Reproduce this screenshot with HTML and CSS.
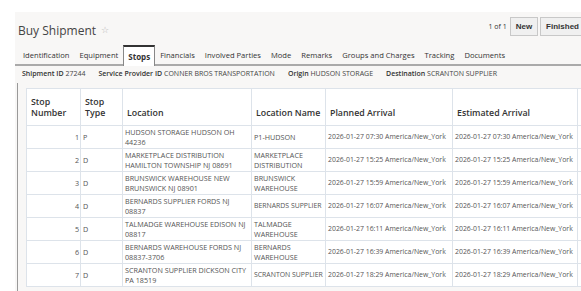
FILE: index.html
```html
<!DOCTYPE html>
<html lang="en">
<head>
    <meta charset="UTF-8">
    <meta name="viewport" content="width=device-width, initial-scale=1.0">
    <title>Buy Shipment</title>
    <link rel="stylesheet" href="styles.css">
</head>
<body>
    <div class="page">
        <div class="header">
            <h1>Buy Shipment <span class="star">&#9734;</span></h1>
            <div class="actions">
                <span class="count">1 of 1</span>
                <button>New</button>
                <button>Finished</button>
            </div>
        </div>
        <div class="tabs">
            <span class="tab">Identification</span>
            <span class="tab">Equipment</span>
            <span class="tab active">Stops</span>
            <span class="tab">Financials</span>
            <span class="tab">Involved Parties</span>
            <span class="tab">Mode</span>
            <span class="tab">Remarks</span>
            <span class="tab">Groups and Charges</span>
            <span class="tab">Tracking</span>
            <span class="tab">Documents</span>
        </div>
        <div class="info">
            <span><b>Shipment ID</b> 27244</span>
            <span><b>Service Provider ID</b> CONNER BROS TRANSPORTATION</span>
            <span><b>Origin</b> HUDSON STORAGE</span>
            <span><b>Destination</b> SCRANTON SUPPLIER</span>
        </div>
        <div class="panel">
            <table class="stops">
                <colgroup>
                    <col style="width: 54px">
                    <col style="width: 42px">
                    <col style="width: 129px">
                    <col style="width: 74px">
                    <col style="width: 127px">
                    <col style="width: 125px">
                    <col style="width: 60px">
                </colgroup>
                <thead>
                    <tr>
                        <th>Stop<br>Number</th>
                        <th>Stop<br>Type</th>
                        <th>Location</th>
                        <th>Location Name</th>
                        <th>Planned Arrival</th>
                        <th>Estimated Arrival</th>
                        <th></th>
                    </tr>
                </thead>
                <tbody>
                    <tr>
                        <td class="num">1</td><td>P</td>
                        <td>HUDSON STORAGE HUDSON OH 44236</td>
                        <td>P1-HUDSON</td>
                        <td class="date">2026-01-27 07:30 America/New_York</td>
                        <td class="date">2026-01-27 07:30 America/New_York</td>
                        <td></td>
                    </tr>
                    <tr>
                        <td class="num">2</td><td>D</td>
                        <td>MARKETPLACE DISTRIBUTION HAMILTON TOWNSHIP NJ 08691</td>
                        <td>MARKETPLACE DISTRIBUTION</td>
                        <td class="date">2026-01-27 15:25 America/New_York</td>
                        <td class="date">2026-01-27 15:25 America/New_York</td>
                        <td></td>
                    </tr>
                    <tr>
                        <td class="num">3</td><td>D</td>
                        <td>BRUNSWICK WAREHOUSE NEW BRUNSWICK NJ 08901</td>
                        <td>BRUNSWICK WAREHOUSE</td>
                        <td class="date">2026-01-27 15:59 America/New_York</td>
                        <td class="date">2026-01-27 15:59 America/New_York</td>
                        <td></td>
                    </tr>
                    <tr>
                        <td class="num">4</td><td>D</td>
                        <td>BERNARDS SUPPLIER FORDS NJ 08837</td>
                        <td class="single">BERNARDS SUPPLIER</td>
                        <td class="date">2026-01-27 16:07 America/New_York</td>
                        <td class="date">2026-01-27 16:07 America/New_York</td>
                        <td></td>
                    </tr>
                    <tr>
                        <td class="num">5</td><td>D</td>
                        <td>TALMADGE WAREHOUSE EDISON NJ 08817</td>
                        <td>TALMADGE WAREHOUSE</td>
                        <td class="date">2026-01-27 16:11 America/New_York</td>
                        <td class="date">2026-01-27 16:11 America/New_York</td>
                        <td></td>
                    </tr>
                    <tr>
                        <td class="num">6</td><td>D</td>
                        <td>BERNARDS WAREHOUSE FORDS NJ 08837-3706</td>
                        <td>BERNARDS WAREHOUSE</td>
                        <td class="date">2026-01-27 16:39 America/New_York</td>
                        <td class="date">2026-01-27 16:39 America/New_York</td>
                        <td></td>
                    </tr>
                    <tr>
                        <td class="num">7</td><td>D</td>
                        <td>SCRANTON SUPPLIER DICKSON CITY PA 18519</td>
                        <td class="single">SCRANTON SUPPLIER</td>
                        <td class="date">2026-01-27 18:29 America/New_York</td>
                        <td class="date">2026-01-27 18:29 America/New_York</td>
                        <td></td>
                    </tr>
                </tbody>
            </table>
        </div>
    </div>
</body>
</html>
```

FILE: styles.css
```css
body {
    margin: 0;
    font-family: "Open Sans", Arial, sans-serif;
    background-color: white;
    overflow: hidden;
}
.page {
    margin: 12px 0 0 15px;
    background-color: #f8f7f6;
    height: 279px;
}
.header {
    display: flex;
    align-items: flex-start;
    justify-content: space-between;
    height: 32px;
}
h1 {
    margin: 9px 0 0 3px;
    font-size: 12px;
    line-height: 17px;
    font-weight: 400;
    color: #444;
}
.star {
    font-size: 9px;
    color: #b5b5b5;
    margin-left: 2px;
    vertical-align: 2px;
}
.actions {
    display: flex;
    align-items: center;
    gap: 2px;
    margin: 5px -4px 0 0;
}
.count {
    font-size: 7px;
    color: #333;
    margin-right: 1px;
}
button {
    font-family: "Liberation Sans", Arial, sans-serif;
    font-size: 8px;
    font-weight: bold;
    color: #333;
    background-color: #f0f0f0;
    border: 1px solid #c8c8c8;
    padding: 4px 5px;
    cursor: pointer;
}
.tabs {
    display: flex;
    align-items: flex-end;
    height: 20px;
    border-bottom: 2px solid #aaa;
    padding-left: 3px;
}
.tab {
    font-size: 7.6px;
    color: #333;
    padding: 0 5px 4px;
}
.tab.active {
    font-weight: bold;
    font-size: 8px;
    background-color: #fff;
    border: 1px solid #888;
    border-top: 2px solid #333;
    border-bottom: none;
    padding: 4px 4px 4px;
    margin-bottom: -2px;
}
.info {
    display: flex;
    gap: 13px;
    font-size: 7px;
    color: #444;
    padding: 3px 0 0 7px;
    height: 14px;
}
.info b {
    font-weight: 600;
    color: #333;
}
.panel {
    margin-left: 2px;
    border-left: 1px solid #999;
    padding: 5px 0 0 8px;
    height: 205px;
    overflow: hidden;
}
.stops {
    border-collapse: collapse;
    table-layout: fixed;
    background-color: white;
    width: 611px;
}
.stops th,
.stops td {
    border: 1px solid #dde3ea;
    padding: 1px 2px;
    text-align: left;
}
.stops th {
    font-size: 8.8px;
    font-weight: 600;
    color: #333;
    vertical-align: bottom;
    height: 30px;
    line-height: 11px;
    padding: 0 4px 6px;
    white-space: nowrap;
}
.stops td {
    font-size: 7.2px;
    color: #555;
    line-height: 10px;
    height: 20px;
    vertical-align: middle;
}
.stops td.num {
    text-align: right;
    padding-right: 1px;
}
.stops td.date,
.stops td.single {
    font-size: 6.9px;
    white-space: nowrap;
    overflow: hidden;
}
```
